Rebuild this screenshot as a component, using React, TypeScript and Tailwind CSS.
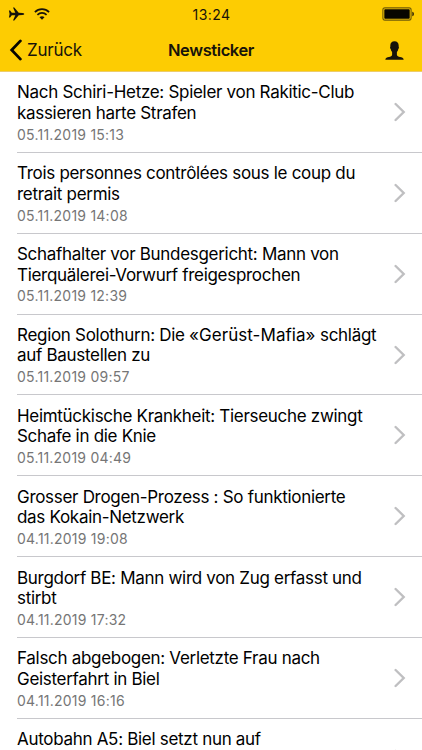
type NewsItem = {
  lines: string[];
  date: string;
};

const news: NewsItem[] = [
  {
    lines: ["Nach Schiri-Hetze: Spieler von Rakitic-Club", "kassieren harte Strafen"],
    date: "05.11.2019 15:13",
  },
  {
    lines: ["Trois personnes contrôlées sous le coup du", "retrait permis"],
    date: "05.11.2019 14:08",
  },
  {
    lines: ["Schafhalter vor Bundesgericht: Mann von", "Tierquälerei-Vorwurf freigesprochen"],
    date: "05.11.2019 12:39",
  },
  {
    lines: ["Region Solothurn: Die «Gerüst-Mafia» schlägt", "auf Baustellen zu"],
    date: "05.11.2019 09:57",
  },
  {
    lines: ["Heimtückische Krankheit: Tierseuche zwingt", "Schafe in die Knie"],
    date: "05.11.2019 04:49",
  },
  {
    lines: ["Grosser Drogen-Prozess : So funktionierte", "das Kokain-Netzwerk"],
    date: "04.11.2019 19:08",
  },
  {
    lines: ["Burgdorf BE: Mann wird von Zug erfasst und", "stirbt"],
    date: "04.11.2019 17:32",
  },
  {
    lines: ["Falsch abgebogen: Verletzte Frau nach", "Geisterfahrt in Biel"],
    date: "04.11.2019 16:16",
  },
  {
    lines: ["Autobahn A5: Biel setzt nun auf"],
    date: "",
  },
];

function StatusBar() {
  return (
    <div className="grid h-7 grid-cols-3 items-center pl-2 pr-[7px]">
      <div className="flex items-center gap-[9px]">
        <svg width="17" height="14" viewBox="0 0 17 14" fill="#17130a">
          <path d="M.9 3.4h1.2l1.7 2.4h3.5L5 .6h1.3l4.4 5.2 3.8.2c1 .1 1.8.5 1.8 1s-.8.9-1.8 1l-3.8.2-4.4 5.2H5l2.3-5.2H3.8l-1.7 2.4H.9L1.6 7z" />
        </svg>
        <svg className="-mt-px" width="16" height="12" viewBox="0 0 16 12" fill="none" stroke="#17130a" strokeWidth="1.7">
          <path d="M.9 4.1C4.8.2 11.2.2 15.1 4.1" />
          <path d="M3.4 6.8c2.6-2.5 6.6-2.5 9.2 0" />
          <path d="M8 11.8 5.5 9.3c1.4-1.3 3.6-1.3 5 0z" fill="#17130a" stroke="none" />
        </svg>
      </div>
      <span className="text-center text-[14px] tracking-[0.4px] text-[#17130a]">13:24</span>
      <svg className="justify-self-end" width="33" height="14" viewBox="0 0 33 14">
        <rect x=".9" y=".9" width="28.2" height="12.2" rx="2" fill="none" stroke="#705b08" strokeWidth="1.1" />
        <rect x="2.3" y="2.3" width="25.4" height="9.4" rx=".8" fill="#080600" />
        <path d="M30.4 4.7c1.9.3 1.9 4.3 0 4.6z" fill="#17130a" />
      </svg>
    </div>
  );
}

function NavBar() {
  return (
    <div className="grid h-[43px] grid-cols-[1fr_auto_1fr] items-center pl-[9px] pr-[18px] pt-px">
      <button className="flex items-center gap-1 text-[17px] tracking-[-0.25px] text-[#17130a]">
        <svg
          width="14"
          height="22"
          viewBox="0 0 14 22"
          fill="none"
          stroke="#080600"
          strokeWidth="2.8"
          strokeLinecap="round"
        >
          <path d="M11.4 1.9 2.7 11l8.7 9.1" />
        </svg>
        <span className="pt-px">Zurück</span>
      </button>
      <h1 className="pl-[9px] text-center text-[16.5px] font-semibold tracking-[-0.4px] text-[#17130a]">
        Newsticker
      </h1>
      <button className="justify-self-end">
        <svg width="19" height="19" viewBox="0 0 19 19" fill="#17130a">
          <path d="M9.5.3C6.8.3 5.3 2 5.3 4.7v1.1c-.5.4-.2 1.9.4 2.2.2 1.3.7 2.2 1.4 2.9v3.1c-.3 1.2-1.5 1.6-3.1 2.1-1.9.5-3.5.8-3.7 2.7h18.4c-.2-1.9-1.8-2.2-3.7-2.7-1.6-.5-2.8-.9-3.1-2.1v-3.1c.7-.7 1.2-1.6 1.4-2.9.6-.3.9-1.8.4-2.2V4.7C13.7 2 12.2.3 9.5.3z" />
        </svg>
      </button>
    </div>
  );
}

// Quoted words are set a little wider than the rest of the headline
function HeadlineLine({ text }: { text: string }) {
  return (
    <span className="block whitespace-nowrap">
      {text.split(/(«.*?»)/).map((part, i) =>
        part.startsWith("«") ? (
          <span key={i} className="tracking-[0.05px]">
            {part}
          </span>
        ) : (
          part
        )
      )}
    </span>
  );
}

function NewsRow({ item }: { item: NewsItem }) {
  return (
    <li className="ml-[17px] flex h-[80.86px] shrink-0 items-center justify-between border-b border-[#c8c8cc] pr-4">
      <div className="h-full pt-[10.4px]">
        <h2 className="text-[17px] leading-[20.4px] tracking-[-0.3px] text-black">
          {item.lines.map((line) => (
            <HeadlineLine key={line} text={line} />
          ))}
        </h2>
        <p className="mt-[2.5px] text-[14px] leading-[18px] tracking-[0.23px] text-[#767676]">
          {item.date}
        </p>
      </div>
      <svg
        width="12"
        height="20"
        viewBox="0 0 12 20"
        fill="none"
        stroke="#bfbfc1"
        strokeWidth="2.4"
        strokeLinecap="round"
      >
        <path d="M1.6 2 9.7 10l-8.1 8" />
      </svg>
    </li>
  );
}

export default function App() {
  return (
    <main className="flex h-[750px] w-[422px] flex-col overflow-hidden bg-white font-['Inter',sans-serif]">
      <header className="shrink-0 border-b border-[#edcd6a] bg-[#fdcc02]">
        <StatusBar />
        <NavBar />
      </header>
      <ul className="flex min-h-0 flex-1 flex-col overflow-hidden">
        {news.map((item) => (
          <NewsRow key={item.lines[0]} item={item} />
        ))}
      </ul>
    </main>
  );
}
